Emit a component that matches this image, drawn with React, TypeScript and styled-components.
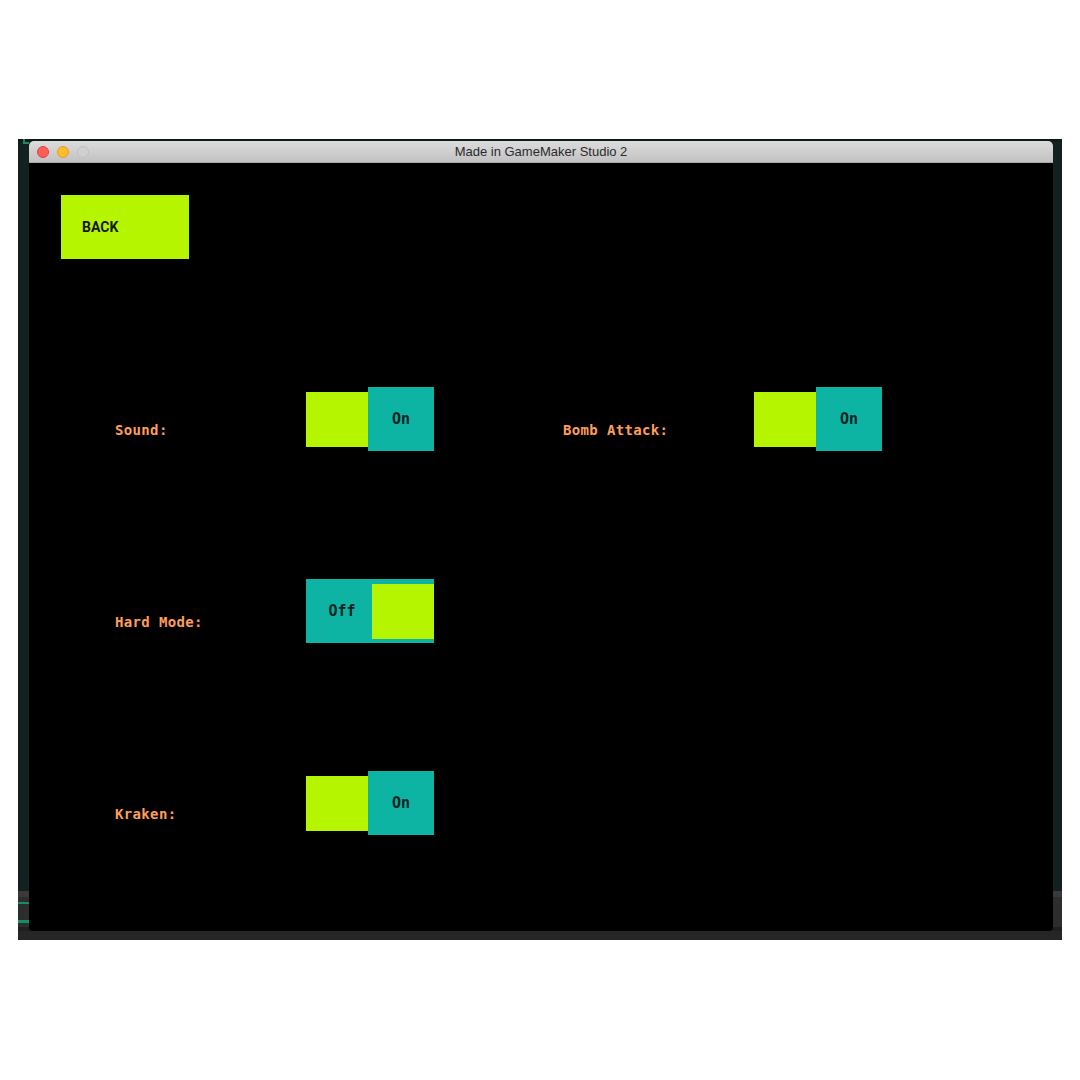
import React from "react";
import styled, { createGlobalStyle } from "styled-components";

const GlobalStyle = createGlobalStyle`
  html, body {
    margin: 0;
    padding: 0;
    background: #ffffff;
  }
  body {
    font-family: "Liberation Sans", Arial, sans-serif;
  }
`;

const Page = styled.div`
  display: flex;
  padding: 139px 0 0 18px;
`;

const Desktop = styled.div`
  width: 1044px;
  height: 801px;
  box-sizing: border-box;
  padding: 2px 0 0 11px;
  background:
    linear-gradient(#129160, #129160) 0 763px / 11px 2px no-repeat,
    linear-gradient(#129160, #129160) 0 781px / 11px 3px no-repeat,
    linear-gradient(#1d8c5a, #1d8c5a) 5px 0 / 2px 5px no-repeat,
    linear-gradient(#1d8c5a, #1d8c5a) 5px 3px / 6px 2px no-repeat,
    linear-gradient(
      to bottom,
      #0d1616 0px,
      #142121 4px,
      #142121 752px,
      #3a3a3a 752px,
      #3a3a3a 758px,
      #2d2d2d 758px,
      #2d2d2d 788px,
      #1f1f1f 788px,
      #1f1f1f 792px,
      #262626 792px
    );
`;

const Window = styled.div`
  width: 1024px;
  display: flex;
  flex-direction: column;
`;

const TitleBar = styled.div`
  height: 22px;
  box-sizing: border-box;
  border-radius: 5px 5px 0 0;
  background: linear-gradient(to bottom, #dcdcdc 0%, #cfcfcf 50%, #c2c2c2 100%);
  border-bottom: 1px solid #a9a9a9;
  display: grid;
  grid-template-columns: 1fr auto 1fr;
  align-items: center;
  padding: 0 8px;
`;

const Lights = styled.div`
  display: flex;
  gap: 8px;
  align-items: center;
`;

const Light = styled.span<{ $color: string; $border: string }>`
  width: 12px;
  height: 12px;
  box-sizing: border-box;
  border-radius: 50%;
  background: ${(p) => p.$color};
  border: 1px solid ${(p) => p.$border};
`;

const Title = styled.div`
  font-family: "Liberation Sans", Arial, sans-serif;
  font-size: 13px;
  color: #2a2a2a;
  line-height: 16px;
  padding-top: 1px;
`;

const Stage = styled.div`
  height: 768px;
  box-sizing: border-box;
  background: #000000;
  border-radius: 0 0 4px 4px;
  padding: 32px 0 0 32px;
  display: flex;
  flex-direction: column;
  align-items: flex-start;
`;

const BackButton = styled.button`
  width: 128px;
  height: 64px;
  border: none;
  margin: 0;
  padding: 0 0 0 21px;
  background: #b6f500;
  display: flex;
  align-items: center;
  font-family: Roboto, "Liberation Sans", sans-serif;
  font-weight: 700;
  font-size: 14px;
  color: #161616;
  cursor: pointer;
`;

const SettingsGrid = styled.div`
  margin: 128px 0 0 54px;
  display: grid;
  grid-template-columns: repeat(2, 448px);
  row-gap: 128px;
`;

const Setting = styled.div`
  display: flex;
  align-items: flex-start;
`;

const Label = styled.div`
  width: 191px;
  margin-top: 35px;
  font-family: "DejaVu Sans Mono", "Liberation Mono", monospace;
  font-weight: 700;
  font-size: 14px;
  letter-spacing: 0.35px;
  line-height: 16px;
  color: #ff9e5c;
`;

const Toggle = styled.div<{ $on: boolean }>`
  width: 128px;
  height: 64px;
  display: flex;
  align-items: center;
  background: ${(p) => (p.$on ? "transparent" : "#0db3a3")};
`;

const Knob = styled.div`
  width: 62px;
  height: 55px;
  background: #b6f500;
`;

const Face = styled.div<{ $on: boolean }>`
  width: 66px;
  height: 64px;
  box-sizing: border-box;
  display: flex;
  align-items: center;
  justify-content: center;
  padding-left: ${(p) => (p.$on ? "0" : "6px")};
  background: ${(p) => (p.$on ? "#0db3a3" : "transparent")};
  font-family: "DejaVu Sans Mono", "Liberation Mono", monospace;
  font-weight: 700;
  font-size: 15px;
  color: #0c2222;
`;

const Empty = styled.div``;

function Switch({ on }: { on: boolean }) {
  return (
    <Toggle $on={on}>
      {on ? (
        <>
          <Knob />
          <Face $on>On</Face>
        </>
      ) : (
        <>
          <Face $on={false}>Off</Face>
          <Knob />
        </>
      )}
    </Toggle>
  );
}

export default function App() {
  return (
    <>
      <GlobalStyle />
      <Page>
        <Desktop>
          <Window>
            <TitleBar>
              <Lights>
                <Light $color="#fc5f57" $border="#e0443e" />
                <Light $color="#fdbc2e" $border="#dea123" />
                <Light $color="#d0d0d0" $border="#c0c0c0" />
              </Lights>
              <Title>Made in GameMaker Studio 2</Title>
              <div />
            </TitleBar>
            <Stage>
              <BackButton>BACK</BackButton>
              <SettingsGrid>
                <Setting>
                  <Label>Sound:</Label>
                  <Switch on />
                </Setting>
                <Setting>
                  <Label>Bomb Attack:</Label>
                  <Switch on />
                </Setting>
                <Setting>
                  <Label>Hard Mode:</Label>
                  <Switch on={false} />
                </Setting>
                <Empty />
                <Setting>
                  <Label>Kraken:</Label>
                  <Switch on />
                </Setting>
              </SettingsGrid>
            </Stage>
          </Window>
        </Desktop>
      </Page>
    </>
  );
}
